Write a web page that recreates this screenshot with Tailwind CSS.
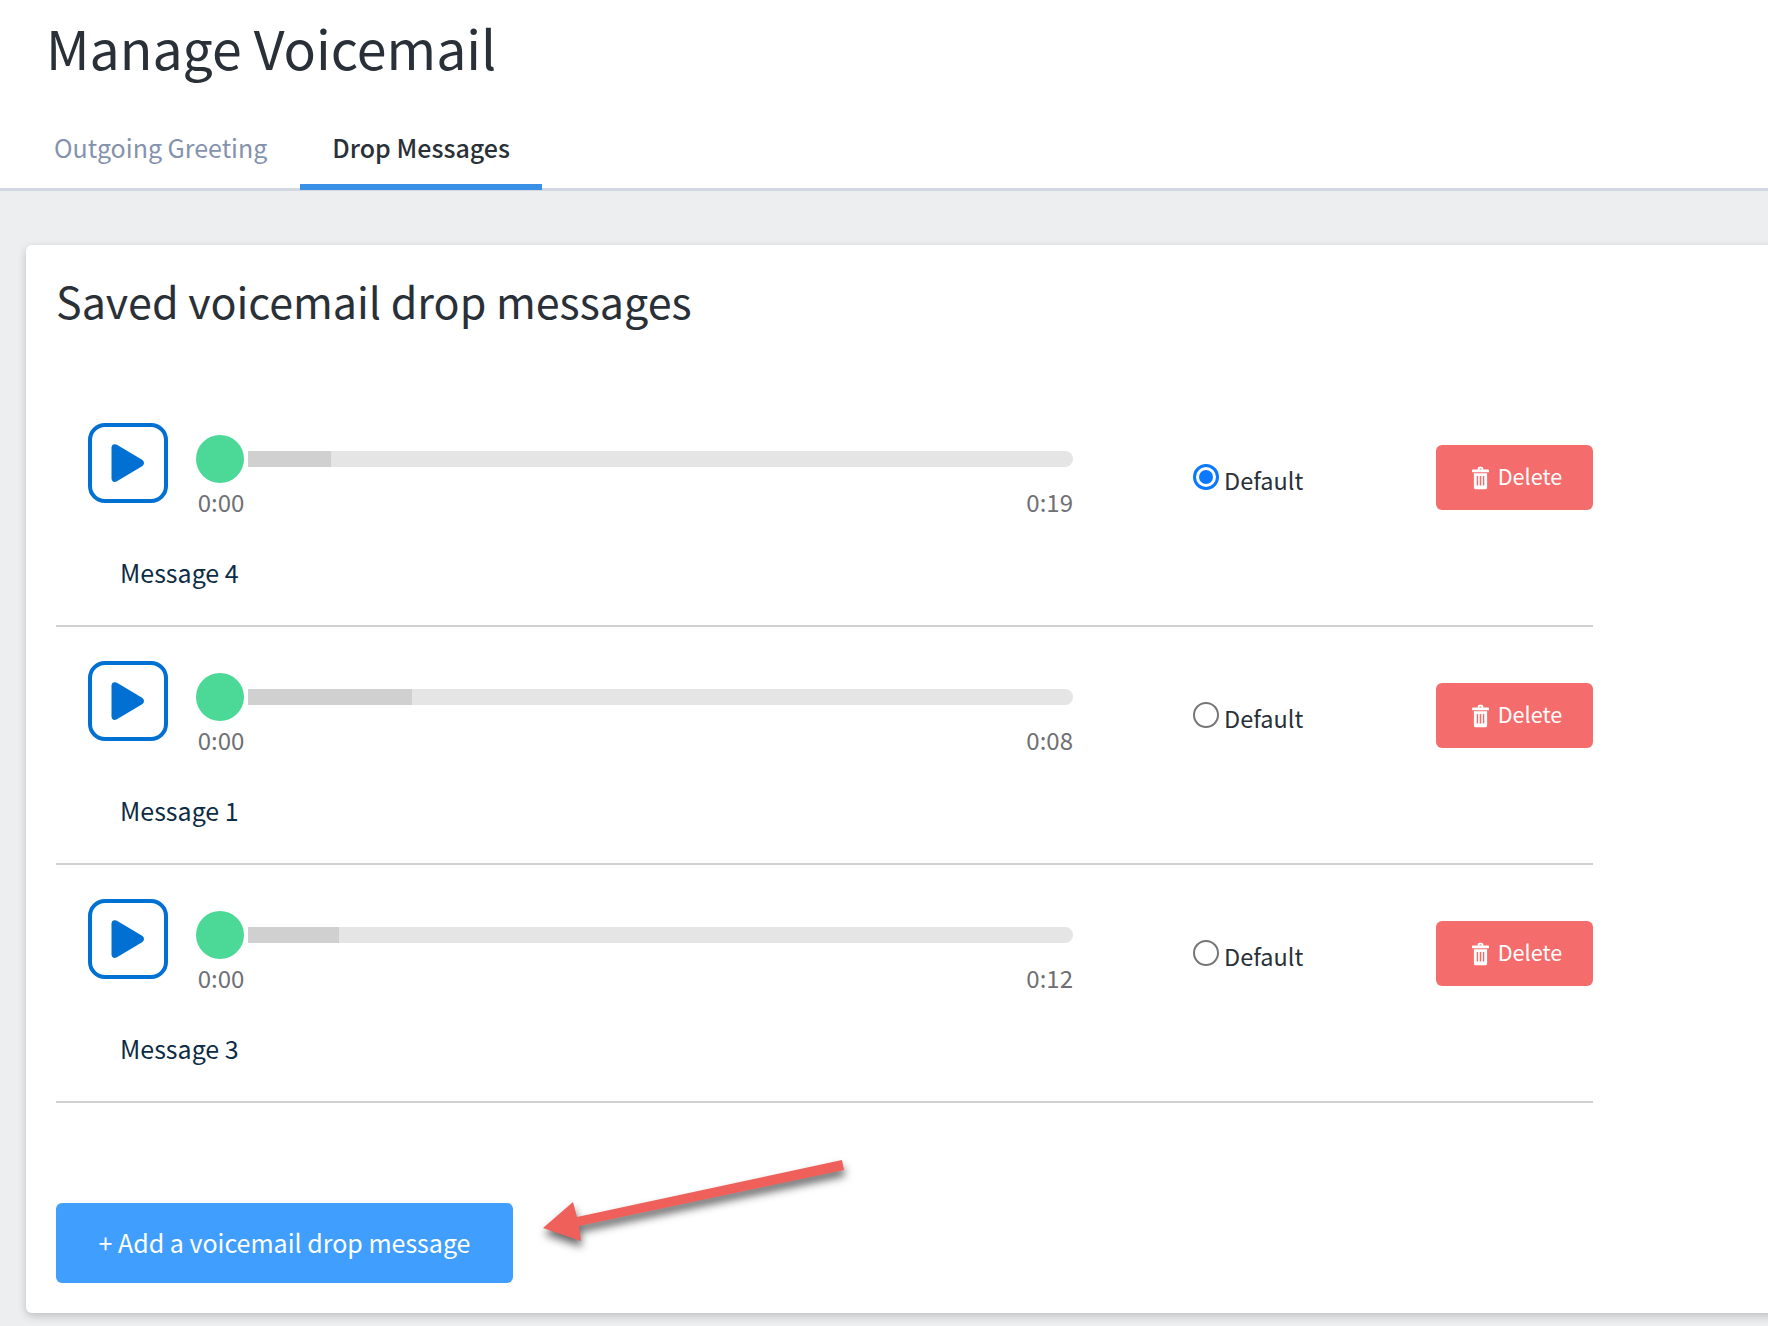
<!DOCTYPE html>
<html lang="en">
<head>
  <meta charset="UTF-8" />
  <title>Manage Voicemail</title>
  <script src="https://cdn.jsdelivr.net/npm/@tailwindcss/browser@4"></script>
</head>
<body class="relative h-[1326px] w-[1768px] overflow-hidden bg-[#edeef0] font-['Noto_Sans_CJK_SC','Noto_Sans',sans-serif] text-[#2a3038]">

  <!-- Header -->
  <header class="h-[191px] border-b-[3px] border-[#d3d7df] bg-white">
    <h1 class="pl-[46px] pt-[13px] text-[53.6px] leading-[68px] font-normal">Manage Voicemail</h1>
    <nav class="mt-[32px] flex pl-[22px] text-[25px] leading-[40px]">
      <a class="h-[77px] pl-[32px] pr-[33px] pt-[14px] text-[#8492ad]">Outgoing Greeting</a>
      <a class="h-[77px] border-b-[6px] border-[#3a8fe6] px-[32px] pt-[14px] font-medium">Drop Messages</a>
    </nav>
  </header>

  <!-- Card -->
  <main class="ml-[26px] mt-[54px] h-[1068px] w-[1760px] rounded-l-[6px] bg-white pl-[30px] pt-[26px] shadow-[0_3px_9px_rgba(0,0,0,0.2)]">
    <h2 class="text-[43px] leading-[58px] font-normal">Saved voicemail drop messages</h2>

    <div class="mt-[60px] w-[1537px]">
      <!-- Message 4 -->
      <section class="h-[238px] border-b-2 border-[#d0d0d0] pt-[34px]">
        <div class="flex items-start">
          <button class="ml-[32px] flex h-[80px] w-[80px] items-center justify-center rounded-[17px] border-4 border-[#0070d2]">
            <svg width="34" height="40" viewBox="0 0 34 40"><path d="M5.5 1.5 L31.5 17 Q34.5 20 31.5 23 L5.5 38.5 Q1 40 0.5 35.5 L0.5 4.5 Q1 0 5.5 1.5 Z" fill="#0070d2" /></svg>
          </button>
          <div class="ml-[28px] mt-[12px] w-[877px]">
            <div class="flex items-center">
              <span class="h-[48px] w-[48px] shrink-0 rounded-full bg-[#4cd897]"></span>
              <div class="ml-[4px] h-[16px] flex-1 overflow-hidden rounded-r-full bg-[#e5e5e5]"><div class="h-full w-[83px] bg-[#d0d0d0]"></div></div>
            </div>
            <div class="mt-[4px] flex justify-between text-[24px] leading-[30px] text-[#6f7074]"><span class="ml-[1px] w-[48px] text-center">0:00</span><span>0:19</span></div>
          </div>
          <label class="ml-[120px] mt-[41px] flex items-start">
            <span class="h-[26px] w-[26px] rounded-full border-[3px] border-[#0a78ff] p-[3px]"><span class="block h-full w-full rounded-full bg-[#0a78ff]"></span></span>
            <span class="ml-[5px] -mt-[1px] text-[23.5px] leading-[34px]">Default</span>
          </label>
          <button class="ml-auto mt-[22px] flex h-[65px] w-[157px] items-center justify-center gap-[9px] rounded-[6px] bg-[#f56c6c] pl-[5px] text-[21.6px] text-white">
            <svg width="17" height="24" viewBox="0 0 18 24" fill="#fff"><path fill-rule="evenodd" d="M6 3V2a2 2 0 0 1 2-2h2a2 2 0 0 1 2 2v1h5a1 1 0 0 1 1 1v2H0V4a1 1 0 0 1 1-1h5Zm2 0h2V2H8v1ZM2 7h14v15a2 2 0 0 1-2 2H4a2 2 0 0 1-2-2V7Zm3 3v10h1.5V10H5Zm3.2 0v10h1.6V10H8.2Zm3.3 0v10H13V10h-1.5Z" /></svg>
            <span class="-mt-[2px]">Delete</span>
          </button>
        </div>
        <p class="ml-[64px] mt-[37px] text-[25px] leading-[36px] text-[#0d2c45]">Message 4</p>
      </section>

      <!-- Message 1 -->
      <section class="h-[238px] border-b-2 border-[#d0d0d0] pt-[34px]">
        <div class="flex items-start">
          <button class="ml-[32px] flex h-[80px] w-[80px] items-center justify-center rounded-[17px] border-4 border-[#0070d2]">
            <svg width="34" height="40" viewBox="0 0 34 40"><path d="M5.5 1.5 L31.5 17 Q34.5 20 31.5 23 L5.5 38.5 Q1 40 0.5 35.5 L0.5 4.5 Q1 0 5.5 1.5 Z" fill="#0070d2" /></svg>
          </button>
          <div class="ml-[28px] mt-[12px] w-[877px]">
            <div class="flex items-center">
              <span class="h-[48px] w-[48px] shrink-0 rounded-full bg-[#4cd897]"></span>
              <div class="ml-[4px] h-[16px] flex-1 overflow-hidden rounded-r-full bg-[#e5e5e5]"><div class="h-full w-[164px] bg-[#d0d0d0]"></div></div>
            </div>
            <div class="mt-[4px] flex justify-between text-[24px] leading-[30px] text-[#6f7074]"><span class="ml-[1px] w-[48px] text-center">0:00</span><span>0:08</span></div>
          </div>
          <label class="ml-[120px] mt-[41px] flex items-start">
            <span class="h-[26px] w-[26px] rounded-full border-2 border-[#767676]"></span>
            <span class="ml-[5px] -mt-[1px] text-[23.5px] leading-[34px]">Default</span>
          </label>
          <button class="ml-auto mt-[22px] flex h-[65px] w-[157px] items-center justify-center gap-[9px] rounded-[6px] bg-[#f56c6c] pl-[5px] text-[21.6px] text-white">
            <svg width="17" height="24" viewBox="0 0 18 24" fill="#fff"><path fill-rule="evenodd" d="M6 3V2a2 2 0 0 1 2-2h2a2 2 0 0 1 2 2v1h5a1 1 0 0 1 1 1v2H0V4a1 1 0 0 1 1-1h5Zm2 0h2V2H8v1ZM2 7h14v15a2 2 0 0 1-2 2H4a2 2 0 0 1-2-2V7Zm3 3v10h1.5V10H5Zm3.2 0v10h1.6V10H8.2Zm3.3 0v10H13V10h-1.5Z" /></svg>
            <span class="-mt-[2px]">Delete</span>
          </button>
        </div>
        <p class="ml-[64px] mt-[37px] text-[25px] leading-[36px] text-[#0d2c45]">Message 1</p>
      </section>

      <!-- Message 3 -->
      <section class="h-[238px] border-b-2 border-[#d0d0d0] pt-[34px]">
        <div class="flex items-start">
          <button class="ml-[32px] flex h-[80px] w-[80px] items-center justify-center rounded-[17px] border-4 border-[#0070d2]">
            <svg width="34" height="40" viewBox="0 0 34 40"><path d="M5.5 1.5 L31.5 17 Q34.5 20 31.5 23 L5.5 38.5 Q1 40 0.5 35.5 L0.5 4.5 Q1 0 5.5 1.5 Z" fill="#0070d2" /></svg>
          </button>
          <div class="ml-[28px] mt-[12px] w-[877px]">
            <div class="flex items-center">
              <span class="h-[48px] w-[48px] shrink-0 rounded-full bg-[#4cd897]"></span>
              <div class="ml-[4px] h-[16px] flex-1 overflow-hidden rounded-r-full bg-[#e5e5e5]"><div class="h-full w-[91px] bg-[#d0d0d0]"></div></div>
            </div>
            <div class="mt-[4px] flex justify-between text-[24px] leading-[30px] text-[#6f7074]"><span class="ml-[1px] w-[48px] text-center">0:00</span><span>0:12</span></div>
          </div>
          <label class="ml-[120px] mt-[41px] flex items-start">
            <span class="h-[26px] w-[26px] rounded-full border-2 border-[#767676]"></span>
            <span class="ml-[5px] -mt-[1px] text-[23.5px] leading-[34px]">Default</span>
          </label>
          <button class="ml-auto mt-[22px] flex h-[65px] w-[157px] items-center justify-center gap-[9px] rounded-[6px] bg-[#f56c6c] pl-[5px] text-[21.6px] text-white">
            <svg width="17" height="24" viewBox="0 0 18 24" fill="#fff"><path fill-rule="evenodd" d="M6 3V2a2 2 0 0 1 2-2h2a2 2 0 0 1 2 2v1h5a1 1 0 0 1 1 1v2H0V4a1 1 0 0 1 1-1h5Zm2 0h2V2H8v1ZM2 7h14v15a2 2 0 0 1-2 2H4a2 2 0 0 1-2-2V7Zm3 3v10h1.5V10H5Zm3.2 0v10h1.6V10H8.2Zm3.3 0v10H13V10h-1.5Z" /></svg>
            <span class="-mt-[2px]">Delete</span>
          </button>
        </div>
        <p class="ml-[64px] mt-[37px] text-[25px] leading-[36px] text-[#0d2c45]">Message 3</p>
      </section>
    </div>

    <button class="mt-[100px] h-[80px] w-[457px] rounded-[6px] bg-[#409eff] text-[25px] text-white">+ Add a voicemail drop message</button>
  </main>

  <!-- Annotation arrow -->
  <svg class="absolute left-[530px] top-[1150px] overflow-visible drop-shadow-[1px_6px_4px_rgba(0,0,0,0.6)]" width="330" height="105" viewBox="530 1150 330 105">
    <path d="M842 1160 L844 1170 L579 1226 L581 1241 L543 1228 L573 1202 L577 1217 Z" fill="#f0605b" />
  </svg>

</body>
</html>
